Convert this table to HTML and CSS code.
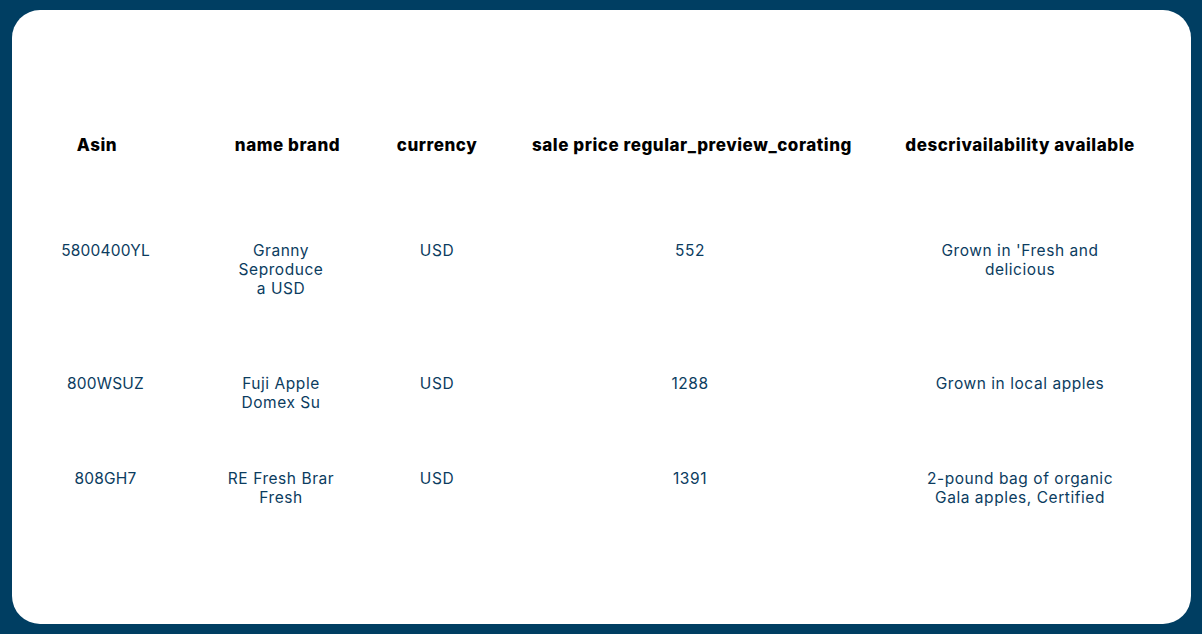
FILE: index.html
```html
<!DOCTYPE html>
<html>
<head>
<meta charset="utf-8">
<link rel="stylesheet" href="styles.css">
</head>
<body>
<div class="card">
  <div class="row head">
    <div class="c c1 h1">Asin</div>
    <div class="c c2 h2">name brand</div>
    <div class="c c3">currency</div>
    <div class="c c4 h4">sale price regular_preview_corating</div>
    <div class="c c5">descrivailability available</div>
  </div>
  <div class="row data r1">
    <div class="c c1 d1">5800400YL</div>
    <div class="c c2 d2">Granny<br>Seproduce<br>a USD</div>
    <div class="c c3">USD</div>
    <div class="c c4 d4">552</div>
    <div class="c c5">Grown in 'Fresh and<br>delicious</div>
  </div>
  <div class="row data r2">
    <div class="c c1 d1">800WSUZ</div>
    <div class="c c2 d2">Fuji Apple<br>Domex Su</div>
    <div class="c c3">USD</div>
    <div class="c c4 d4">1288</div>
    <div class="c c5">Grown in local apples</div>
  </div>
  <div class="row data r3">
    <div class="c c1 d1">808GH7</div>
    <div class="c c2 d2">RE Fresh Brar<br>Fresh</div>
    <div class="c c3">USD</div>
    <div class="c c4 d4">1391</div>
    <div class="c c5">2-pound bag of organic<br>Gala apples, Certified</div>
  </div>
</div>
</body>
</html>
```

FILE: styles.css
```css
html, body {
  margin: 0;
  padding: 0;
}
body {
  background: #003e62;
  width: 1202px;
  height: 634px;
  overflow: hidden;
  padding: 10px 11px 10px 12px;
  box-sizing: border-box;
  font-family: Inter, "Liberation Sans", sans-serif;
}
.card {
  background: #ffffff;
  border-radius: 28px;
  height: 614px;
  box-sizing: border-box;
  padding-top: 126px;
}
.row {
  display: grid;
  grid-template-columns: 176px 192px 114px 396px 260px;
  white-space: nowrap;
}
.c {
  text-align: center;
  line-height: 19px;
}
.head .c {
  font-weight: 800;
  font-size: 17px;
  letter-spacing: 0.55px;
  color: #000000;
}
.head .h1 { padding-right: 6px; }
.head .h2 { padding-left: 7px; }
.head {
  margin-bottom: 86px;
}
.data .c {
  font-size: 15.5px;
  font-weight: 400;
  letter-spacing: 0.55px;
  color: #0b3c60;
}
.data .d1 { padding-left: 11px; letter-spacing: 0.2px; }
.data .d2 { padding-right: 6px; }
.data .d4 { padding-right: 4px; }
.r1 { height: 133px; }
.r2 { height: 95px; }
```
